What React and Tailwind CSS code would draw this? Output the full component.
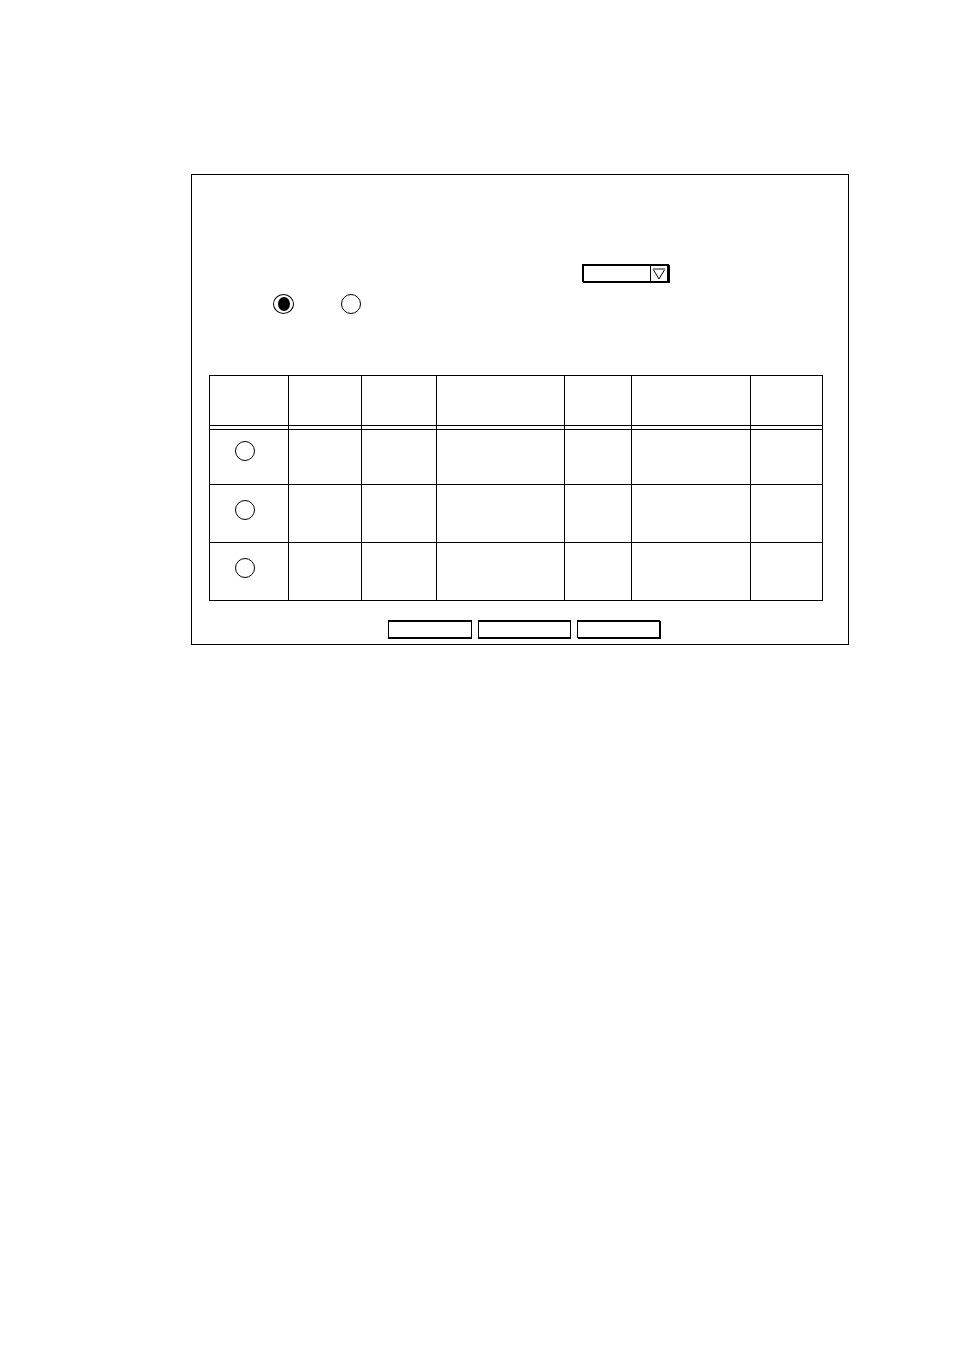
import { useState } from "react";

const columns = [
  { name: "Select", width: "w-[79px]" },
  { name: "Number", width: "w-[73px]" },
  { name: "Type", width: "w-[75px]" },
  { name: "Name", width: "w-[128px]" },
  { name: "Status", width: "w-[67px]" },
  { name: "Address", width: "w-[119px]" },
  { name: "Details", width: "w-[72px]" },
];

const rows = [
  { id: 1, cell: "h-[55px] pt-[11px]" },
  { id: 2, cell: "h-[58px] pt-[15px]" },
  { id: 3, cell: "h-[58px] pt-[15px]" },
];

const radioClass =
  "block h-5 appearance-none rounded-[50%] border border-black bg-white";

const buttonClass = "border-x border-t-2 border-black bg-white";

const App = () => {
  const [mode, setMode] = useState("first");
  const [selected, setSelected] = useState(null);

  return (
    <main className="min-h-screen bg-white pt-[174px] pr-[105px] pl-[191px]">
      <form
        className="border border-black pt-[89px] pr-[25px] pb-[5px] pl-[17px]"
        onSubmit={(e) => e.preventDefault()}
      >
        <div className="flex justify-end pr-[154px]">
          <div className="relative">
            <select
              aria-label="Filter"
              className="block h-[18px] w-[87px] appearance-none border-2 border-b border-black bg-white shadow-[1px_1px_0_black]"
            />
            <span className="pointer-events-none absolute inset-y-0 right-0 flex w-[19px] items-center justify-center border-l border-black pr-[2px]">
              <svg width="14" height="14" viewBox="0 0 14 14" fill="none">
                <path d="M1 3L7 13L13 3" stroke="black" />
                <path d="M1 3H13" stroke="#888888" strokeWidth="2" />
              </svg>
            </span>
          </div>
        </div>

        <div className="mt-3 flex gap-[47px] pl-16">
          <input
            type="radio"
            name="mode"
            aria-label="First mode"
            checked={mode === "first"}
            onChange={() => setMode("first")}
            className={`${radioClass} w-[21px] checked:before:mx-auto checked:before:mt-[2px] checked:before:block checked:before:h-[14px] checked:before:w-[12px] checked:before:rounded-[50%] checked:before:bg-black`}
          />
          <input
            type="radio"
            name="mode"
            aria-label="Second mode"
            checked={mode === "second"}
            onChange={() => setMode("second")}
            className={`${radioClass} w-5 checked:bg-black`}
          />
        </div>

        <table className="mt-[61px] w-full table-fixed border-separate border-spacing-0 border-t border-l border-black">
          <thead>
            <tr>
              {columns.map((c) => (
                <th
                  key={c.name}
                  aria-label={c.name}
                  className={`${c.width} h-[54px] border-r border-b border-black p-0 align-top`}
                >
                  <div className="h-[50px] border-b border-black" />
                </th>
              ))}
            </tr>
          </thead>
          <tbody>
            {rows.map((r) => (
              <tr key={r.id}>
                <td
                  className={`${r.cell} border-r border-b border-black pl-[25px] align-top`}
                >
                  <input
                    type="radio"
                    name="row"
                    aria-label={`Row ${r.id}`}
                    checked={selected === r.id}
                    onChange={() => setSelected(r.id)}
                    className={`${radioClass} w-5 checked:bg-black`}
                  />
                </td>
                {columns.slice(1).map((c) => (
                  <td key={c.name} className="border-r border-b border-black" />
                ))}
              </tr>
            ))}
          </tbody>
        </table>

        <div className="mt-[19px] flex justify-end gap-[6px] pr-[162px]">
          <button
            type="button"
            aria-label="Add"
            className={`${buttonClass} h-[19px] w-[84px] border-b-2`}
          />
          <button
            type="button"
            aria-label="Edit"
            className={`${buttonClass} h-[19px] w-[93px] border-b-2`}
          />
          <button
            type="button"
            aria-label="Delete"
            className={`${buttonClass} mr-px h-[18px] w-[83px] border-b shadow-[1px_1px_0_black]`}
          />
        </div>
      </form>
    </main>
  );
};

export default App;
